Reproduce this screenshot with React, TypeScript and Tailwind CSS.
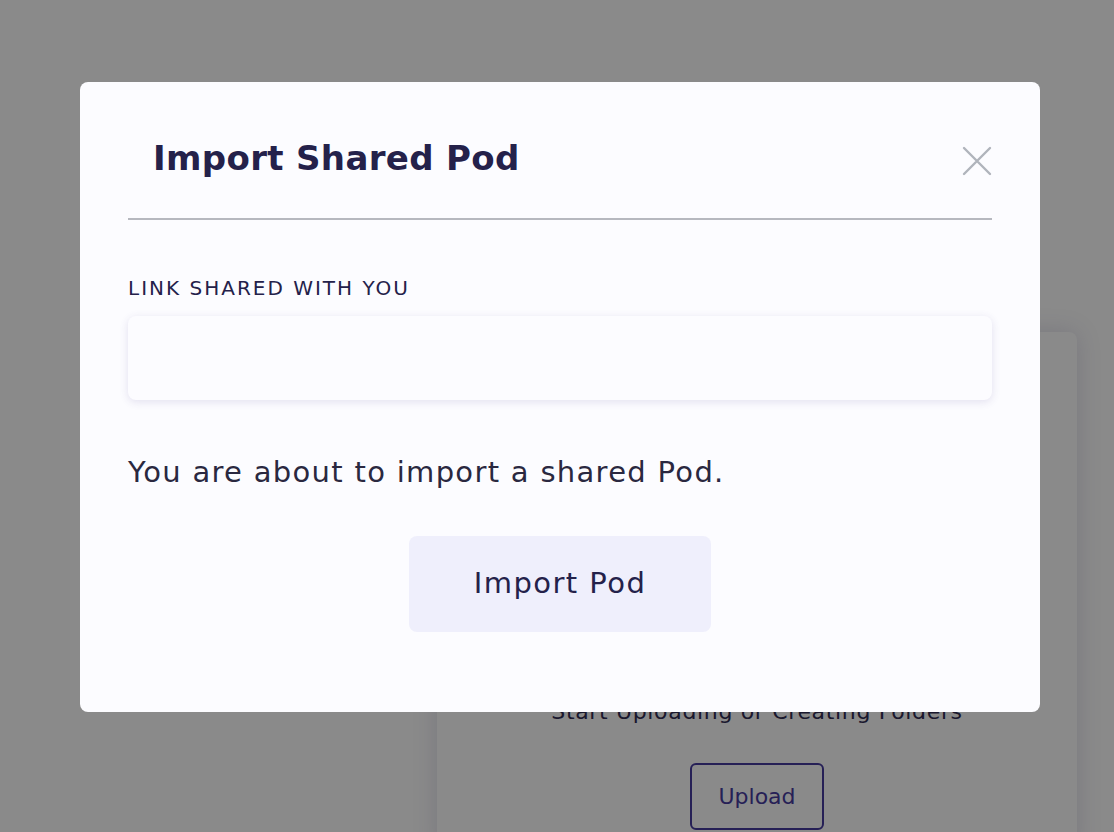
const font = { fontFamily: '"DejaVu Sans", "Noto Sans", sans-serif' }

function BackgroundPage() {
  return (
    <div className="min-h-[832px] w-full bg-white pl-[437px] pt-[332px]">
      <div className="h-[520px] w-[640px] rounded-lg bg-white shadow-[0_0_24px_rgba(60,50,120,0.18)] flex flex-col items-center pt-[364px]">
        <p className="text-[22px] leading-[32px] tracking-[0.03em] text-[#24214a]">Start Uploading or Creating Folders</p>
        <button className="mt-[35px] h-[67px] w-[134px] rounded-md border-2 border-[#3b2f9a] text-[22px] text-[#3b2f9a]">
          Upload
        </button>
      </div>
    </div>
  )
}

export default function App() {
  return (
    <div className="relative h-[832px] w-[1114px] overflow-hidden" style={font}>
      <BackgroundPage />

      {/* overlay */}
      <div className="absolute inset-0 bg-[rgba(17,17,17,0.49)]">
        <div className="ml-[80px] mt-[82px] w-[960px] h-[630px] rounded-lg bg-[#fcfcff] px-[48px]">
          <div className="flex items-center justify-between pt-[52px] pb-[36px] border-b-2 border-[#b6b8bf]">
            <h2 className="pl-[25px] text-[34px] font-bold leading-[48px] tracking-[0.01em] text-[#24214a]">Import Shared Pod</h2>
            <button className="mt-[6px] text-[#b0b4bc]" aria-label="Close">
              <svg width="30" height="30" viewBox="0 0 30 30" fill="none" stroke="currentColor" strokeWidth="2.4" strokeLinecap="round">
                <path d="M2 2L28 28M28 2L2 28" />
              </svg>
            </button>
          </div>

          <label className="mt-[55px] block text-[20px] leading-[26px] tracking-[0.1em] text-[#24214a]">
            LINK SHARED WITH YOU
          </label>
          <input
            type="text"
            className="mt-[15px] h-[84px] w-full rounded-lg bg-[#fcfcff] px-4 text-[20px] shadow-[0_2px_8px_rgba(70,60,140,0.14)] outline-none"
          />

          <p className="mt-[54px] text-[29px] leading-[36px] tracking-[0.045em] text-[#2a2840]">You are about to import a shared Pod.</p>

          <div className="mt-[46px] flex justify-center">
            <button className="h-[96px] w-[302px] rounded-lg bg-[#efeffc] text-[29px] tracking-[0.05em] text-[#24214a]">
              Import Pod
            </button>
          </div>
        </div>
      </div>
    </div>
  )
}
